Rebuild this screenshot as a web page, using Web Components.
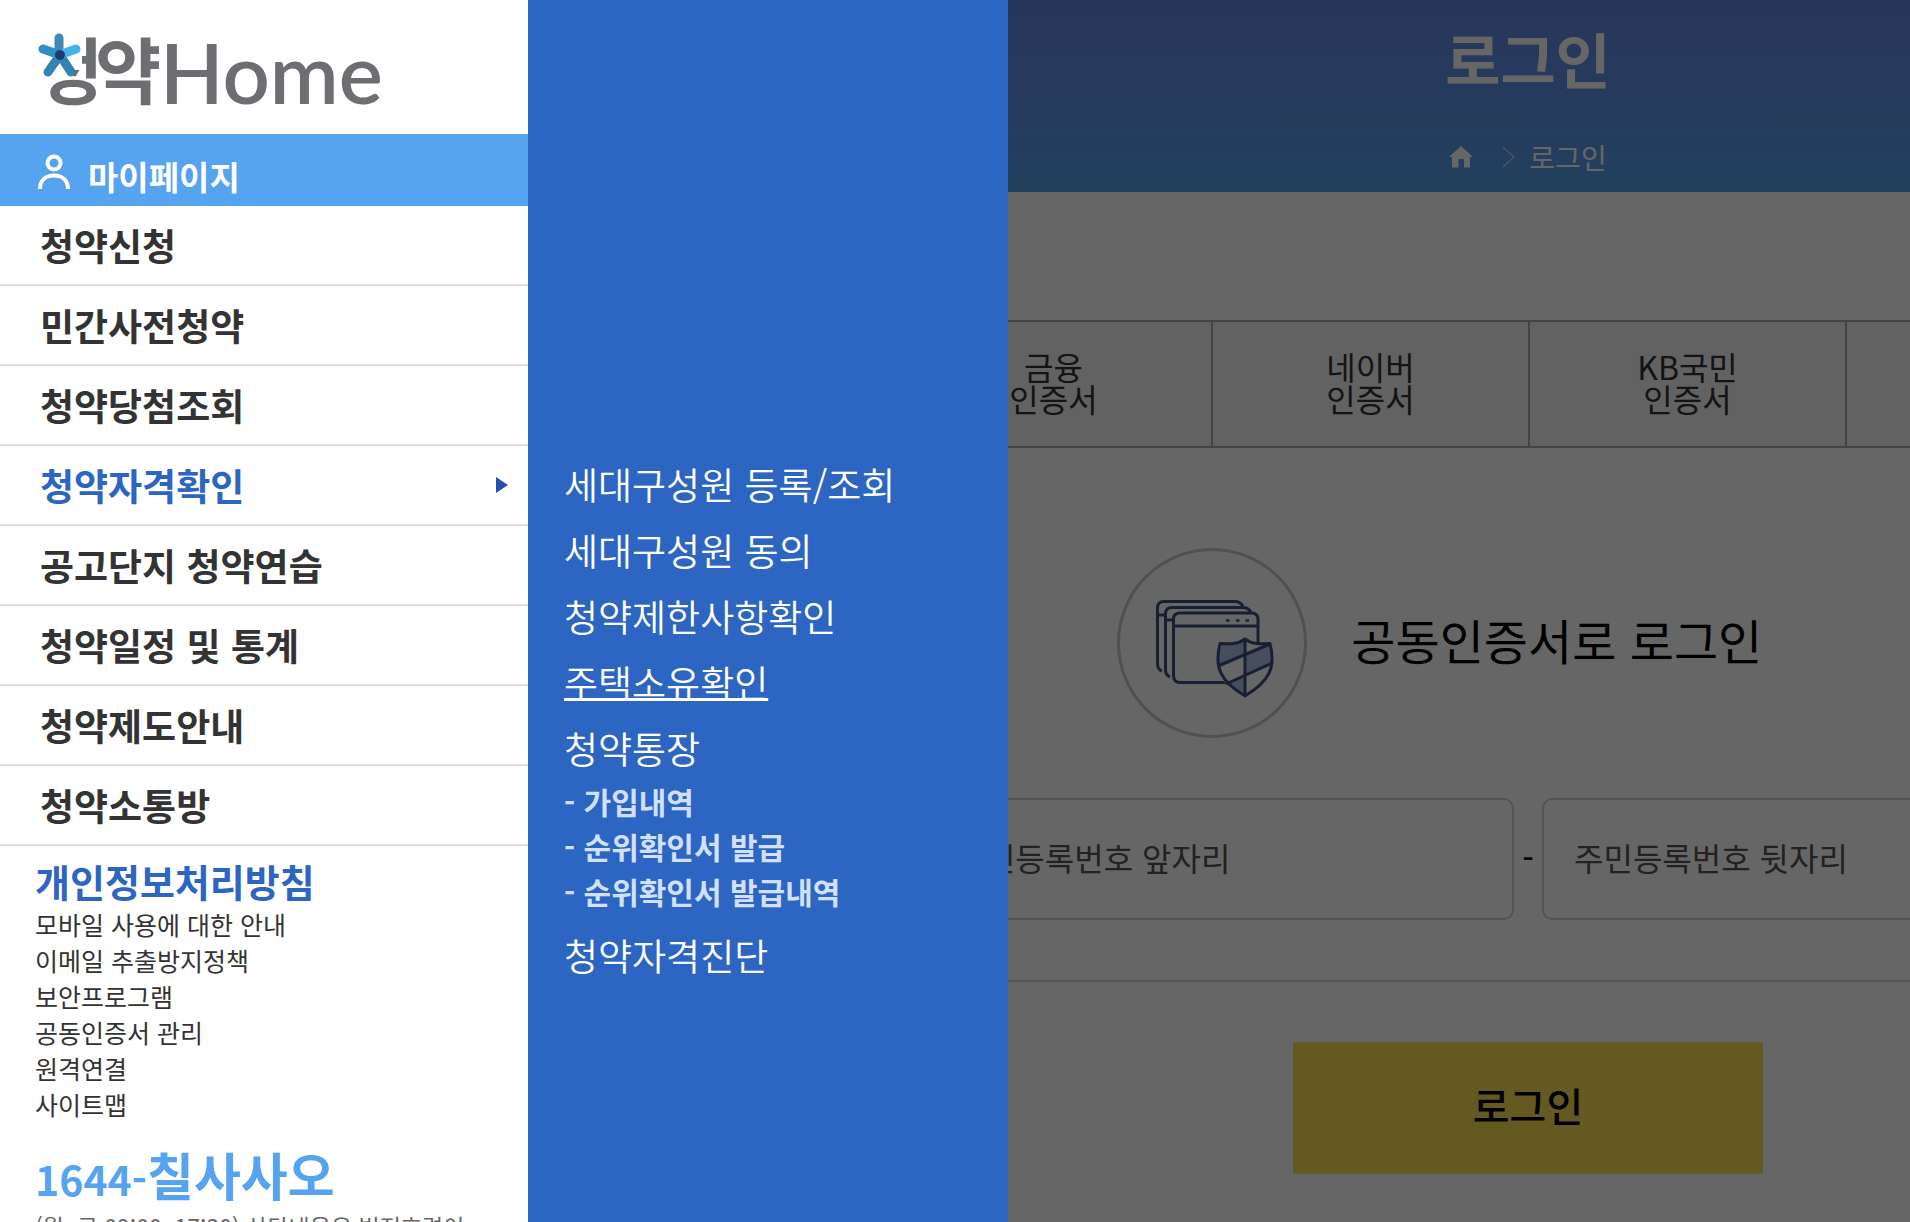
<!DOCTYPE html>
<html lang="ko">
<head>
<meta charset="utf-8">
<meta name="viewport" content="width=device-width, initial-scale=1">
<title>로그인</title>
<style>
  html, body { margin: 0; height: 100%; }
  body {
    overflow: hidden;
    background: #fff;
    color: #333;
    font-family: "Noto Sans CJK KR", "Noto Sans", sans-serif;
  }
</style>
</head>
<body>
<login-page></login-page>
<page-dim></page-dim>
<side-drawer>
  <site-logo slot="logo"></site-logo>
  <my-page-link slot="top">마이페이지</my-page-link>
  <menu-row>청약신청</menu-row>
  <menu-row>민간사전청약</menu-row>
  <menu-row>청약당첨조회</menu-row>
  <menu-row current>청약자격확인</menu-row>
  <menu-row>공고단지 청약연습</menu-row>
  <menu-row>청약일정 및 통계</menu-row>
  <menu-row>청약제도안내</menu-row>
  <menu-row>청약소통방</menu-row>
  <drawer-footer slot="footer"></drawer-footer>
  <sub-menu slot="sub">
    <sub-link>세대구성원 등록/조회</sub-link>
    <sub-link>세대구성원 동의</sub-link>
    <sub-link>청약제한사항확인</sub-link>
    <sub-link current>주택소유확인</sub-link>
    <sub-link>청약통장</sub-link>
    <sub-group>
      <sub-link small>- 가입내역</sub-link>
      <sub-link small>- 순위확인서 발급</sub-link>
      <sub-link small>- 순위확인서 발급내역</sub-link>
    </sub-group>
    <sub-link>청약자격진단</sub-link>
  </sub-menu>
</side-drawer>

<script>
  const define = (name, html) => {
    const template = document.createElement('template');
    template.innerHTML = html;
    customElements.define(name, class extends HTMLElement {
      constructor() {
        super();
        this.attachShadow({ mode: 'open' }).append(template.content.cloneNode(true));
      }
    });
  };

  define('page-dim', `
    <style>
      :host { display: block; position: fixed; inset: 0; background: rgba(0, 0, 0, .6); }
    </style>`);

  /* ---------- drawer ---------- */

  define('side-drawer', `
    <style>
      :host { display: flex; position: fixed; top: 0; bottom: 0; left: 0; }
      nav { width: 528px; background: #fff; overflow: hidden; }
      .logo { padding: 34px 38px 28px; }
    </style>
    <nav aria-label="전체메뉴">
      <div class="logo"><slot name="logo"></slot></div>
      <slot name="top"></slot>
      <slot></slot>
      <slot name="footer"></slot>
    </nav>
    <slot name="sub"></slot>`);

  define('site-logo', `
    <style>
      :host { display: block; }
      a { display: block; color: #6d6e71; text-decoration: none; }
      svg { display: block; overflow: visible; }
      .ko { font-size: 72px; font-weight: 700; }
      .en { font-family: Lato, sans-serif; font-size: 83px; font-weight: 600; }
    </style>
    <a href="#">
      <svg width="340" height="72" viewBox="0 0 340 72">
        <g fill="currentColor">
          <text class="ko" x="-1 57" y="64">청약</text>
          <text class="en" x="122" y="70">Home</text>
        </g>
        <path d="M-10-8H44V36H28V45H-10z" fill="#fff"/>
        <g stroke-width="9" stroke-linecap="round" fill="none">
          <path d="M21 21V4" stroke="#3f88b8"/>
          <path d="M22 21 10 38" stroke="#3583b2"/>
          <path d="M22 21 33 38" stroke="#3583b2"/>
          <path d="M22 21 5 15" stroke="#2f8fc4"/>
          <path d="M24 20 38 15" stroke="#45b2ea"/>
        </g>
        <circle cx="22" cy="21" r="5" fill="#1b3a78"/>
      </svg>
    </a>`);

  define('my-page-link', `
    <style>
      :host { display: block; }
      a {
        display: flex; align-items: center; gap: 18px; box-sizing: border-box; height: 72px; padding: 4px 38px 0;
        background: #56a3ef; color: #fff; text-decoration: none;
        font-size: 33px; font-weight: 700; line-height: 36px;
      }
      span { padding-top: 8px; }
    </style>
    <a href="#">
      <svg width="32" height="36" viewBox="0 0 32 36" fill="none" stroke="#fff" stroke-width="4">
        <circle cx="16" cy="9" r="6.500"/>
        <path d="M2 35C2 26 8 21.500 16 21.500S30 26 30 35"/>
      </svg>
      <span><slot></slot></span>
    </a>`);

  define('menu-row', `
    <style>
      :host { display: block; border-bottom: 2px solid #ddd; }
      a {
        display: flex; align-items: center; justify-content: space-between;
        padding: 19px 20px 19px 40px; line-height: 40px;
        font-size: 37px; font-weight: 700; color: #333; text-decoration: none;
      }
      svg { display: none; }
      :host([current]) a { color: #2c65c2; }
      :host([current]) svg { display: block; }
    </style>
    <a href="#"><span><slot></slot></span>
      <svg width="12" height="16" viewBox="0 0 12 16"><path d="M0 0 12 8 0 16z" fill="#2450ae"/></svg>
    </a>`);

  define('drawer-footer', `
    <style>
      :host { display: block; padding: 15px 35px 0; }
      a { display: block; color: #333; text-decoration: none; }
      ul { margin: 0; padding: 0; list-style: none; }
      .privacy { font-size: 38px; font-weight: 700; line-height: 40px; padding-bottom: 5px; color: #2c65c2; }
      li { font-size: 25px; line-height: 36px; }
      .tel {
        margin: 22px 0 0; line-height: 60px; font-size: 41px; font-weight: 700; color: #56a3ef;
      }
      .tel span { font-size: 51px; }
      p { margin: 0; font-size: 23px; line-height: 36px; color: #666; white-space: nowrap; }
    </style>
    <a class="privacy" href="#">개인정보처리방침</a>
    <ul>
      <li><a href="#">모바일 사용에 대한 안내</a></li>
      <li><a href="#">이메일 추출방지정책</a></li>
      <li><a href="#">보안프로그램</a></li>
      <li><a href="#">공동인증서 관리</a></li>
      <li><a href="#">원격연결</a></li>
      <li><a href="#">사이트맵</a></li>
    </ul>
    <a class="tel" href="tel:1644">1644-<span>칠사사오</span></a>
    <p>(월~금 09:00~17:30) 상담내용은 법적효력이</p>`);

  define('sub-menu', `
    <style>
      :host {
        display: block; box-sizing: border-box; width: 480px; padding: 451px 36px 0;
        background: #2c65c2;
      }
    </style>
    <slot></slot>`);

  define('sub-group', `
    <style>:host { display: block; margin-top: -2px; padding-bottom: 8px; }</style>
    <slot></slot>`);

  define('sub-link', `
    <style>
      :host { display: block; font-size: 37px; font-weight: 350; line-height: 66px; color: #fff; }
      :host([small]) { font-size: 30px; font-weight: 700; line-height: 45px; color: #d2e0fc; }
      a { color: inherit; text-decoration: none; }
      :host([current]) a {
        text-decoration: underline; text-decoration-thickness: 3px;
        text-underline-offset: 0; text-decoration-skip-ink: none;
      }
    </style>
    <a href="#"><slot></slot></a>`);

  /* ---------- page behind the drawer ---------- */

  define('login-page', `
    <style>
      :host { display: block; width: 100%; margin-left: 30%; }
    </style>
    <page-header></page-header>
    <cert-tabs></cert-tabs>
    <login-form></login-form>`);

  define('page-header', `
    <style>
      :host {
        display: flex; flex-direction: column; align-items: center; color: #fff;
        background: linear-gradient(#6886e6, #56a0eb);
      }
      h1 { margin: 0; padding: 22px 0 0; font-size: 60px; font-weight: 700; line-height: 72px; }
      nav { display: flex; align-items: center; padding: 43px 0 15px; font-size: 28px; line-height: 40px; }
      nav a { display: block; }
      svg { display: block; }
      .arrow { margin: 0 14px 0 29px; }
    </style>
    <h1>로그인</h1>
    <nav aria-label="위치">
      <a href="#" aria-label="홈">
        <svg width="24" height="22" viewBox="0 0 24 22"><path d="M12 0 24 11H21V21.500H15V13H9.500V21.500H3V11H0z" fill="#fff"/></svg>
      </a>
      <svg class="arrow" width="13" height="22" viewBox="0 0 13 22"><path d="M1 1 12 11 1 21" fill="none" stroke="#fff"/></svg>
      <span>로그인</span>
    </nav>`);

  define('cert-tabs', `
    <style>
      :host {
        display: grid; grid-template-columns: repeat(6, 1fr); margin-top: 128px; padding: 0 2px 0 6px;
        border: solid #aaa; border-width: 2px 0; background: #f5f5f5;
      }
      button {
        margin: 0; padding: 28px 0 32px; border: 0; border-right: 2px solid #aaa; background: none;
        font: inherit; font-size: 32px; line-height: 32px; color: #333;
      }
      button:first-of-type { grid-column-start: 2; }
    </style>
    <button type="button">금융<br>인증서</button>
    <button type="button">네이버<br>인증서</button>
    <button type="button">KB국민<br>인증서</button>`);

  define('login-form', `
    <style>
      :host { display: block; padding-top: 100px; }
      .method { display: flex; align-items: center; gap: 44px; padding-left: 28.500%; white-space: nowrap; }
      h2 { margin: 0; padding-bottom: 8px; font-size: 48px; font-weight: 400; line-height: 60px; color: #000; }
      svg { display: block; flex: none; }
      .number {
        display: flex; align-items: center; margin-top: 60px; padding: 0 18.400% 60px;
        border-bottom: 2px solid #d0d0d0;
      }
      input {
        box-sizing: border-box; flex: 1; min-width: 0; height: 122px; padding: 0 30px 4px;
        border: 2px solid #d0d0d0; border-radius: 10px; background: #fff;
        font: inherit; font-size: 32px; color: #333;
      }
      input::placeholder { color: #555; opacity: 1; }
      .dash { width: 28px; padding-bottom: 4px; text-align: center; font-size: 32px; font-weight: 500; line-height: 40px; color: #000; }
      .submit {
        display: block; width: 470px; margin: 60px auto 48px; padding: 33px 0 39px; border: 0; background: #fadf52;
        font: inherit; font-size: 40px; font-weight: 500; line-height: 60px; color: #000;
      }
    </style>
    <form>
      <div class="method">
        <svg width="190" height="190" viewBox="0 0 190 190">
          <circle cx="95" cy="95" r="93.500" fill="none" stroke="#c8c8c8" stroke-width="3"/>
          <g fill="#fff" stroke="#3d4f80" stroke-width="3">
            <path d="M45 123C41 122 40.500 119 40.500 115V60Q40.500 53.500 47 53.500H118Q123 53.500 126 58"/>
            <path d="M53 129C49 127 48.500 125 48.500 121V66Q48.500 59.500 55 59.500H126Q131 59.500 134 64"/>
            <path d="M141 98V71Q141 65 134 65H63Q56.500 65 56.500 71V127Q56.500 134.500 63 134.500H113"/>
            <path d="M56.500 78H141M40.500 67H48M48.500 72H56.500"/>
          </g>
          <path d="M109 72.500h3.500M119 72.500h3.500M128.500 72.500h3.500" stroke="#3d4f80" stroke-width="2.500"/>
          <path d="M128 91C120 97 111 96 103 95.500C97 124 104 137 128 148C152 137 159 124 153 95.500C145 96 136 97 128 91z" fill="#fff"/>
          <path d="M128 91C120 97 111 96 103 95.500C101 103 100 111 101 118L128 106zM128 106 153 96.500C155 103 156 108 155 115L128 127zM128 127 111 135C115 140 121 145 128 148z" fill="#b0c4ea"/>
          <g fill="none" stroke="#3d4f80" stroke-width="3" stroke-linejoin="round">
            <path d="M128 91C120 97 111 96 103 95.500C97 119 103 133 128 148C153 133 159 119 153 95.500C145 96 136 97 128 91zM128 91V148M101 118 153 96M109 136 155 115"/>
          </g>
        </svg>
        <h2>공동인증서로 로그인</h2>
      </div>
      <div class="number">
        <input type="text" inputmode="numeric" placeholder="주민등록번호 앞자리" aria-label="주민등록번호 앞자리">
        <span class="dash">-</span>
        <input type="text" inputmode="numeric" placeholder="주민등록번호 뒷자리" aria-label="주민등록번호 뒷자리">
      </div>
      <button class="submit" type="button">로그인</button>
    </form>`);
</script>
</body>
</html>
